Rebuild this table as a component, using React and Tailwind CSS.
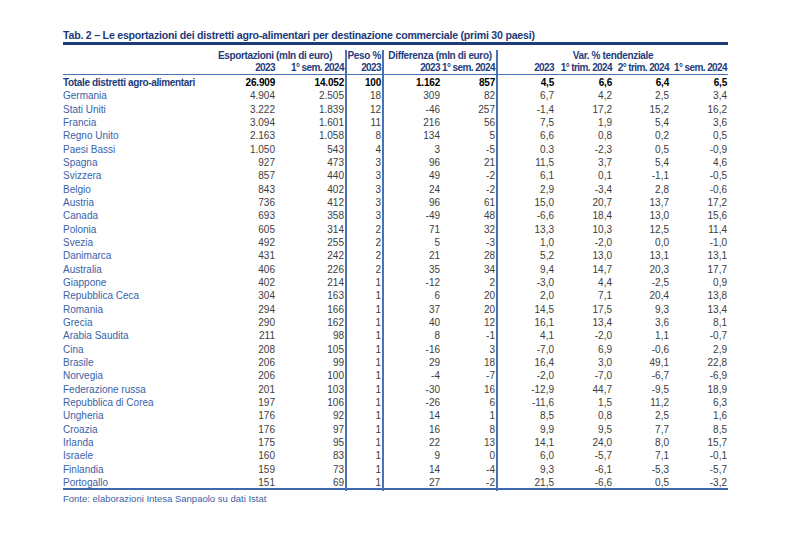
import React from "react";

const rows = [
  ["Germania", "4.904", "2.505", "18", "309", "82", "6,7", "4,2", "2,5", "3,4"],
  ["Stati Uniti", "3.222", "1.839", "12", "-46", "257", "-1,4", "17,2", "15,2", "16,2"],
  ["Francia", "3.094", "1.601", "11", "216", "56", "7,5", "1,9", "5,4", "3,6"],
  ["Regno Unito", "2.163", "1.058", "8", "134", "5", "6,6", "0,8", "0,2", "0,5"],
  ["Paesi Bassi", "1.050", "543", "4", "3", "-5", "0.3", "-2,3", "0,5", "-0,9"],
  ["Spagna", "927", "473", "3", "96", "21", "11,5", "3,7", "5,4", "4,6"],
  ["Svizzera", "857", "440", "3", "49", "-2", "6,1", "0,1", "-1,1", "-0,5"],
  ["Belgio", "843", "402", "3", "24", "-2", "2,9", "-3,4", "2,8", "-0,6"],
  ["Austria", "736", "412", "3", "96", "61", "15,0", "20,7", "13,7", "17,2"],
  ["Canada", "693", "358", "3", "-49", "48", "-6,6", "18,4", "13,0", "15,6"],
  ["Polonia", "605", "314", "2", "71", "32", "13,3", "10,3", "12,5", "11,4"],
  ["Svezia", "492", "255", "2", "5", "-3", "1,0", "-2,0", "0,0", "-1,0"],
  ["Danimarca", "431", "242", "2", "21", "28", "5,2", "13,0", "13,1", "13,1"],
  ["Australia", "406", "226", "2", "35", "34", "9,4", "14,7", "20,3", "17,7"],
  ["Giappone", "402", "214", "1", "-12", "2", "-3,0", "4,4", "-2,5", "0,9"],
  ["Repubblica Ceca", "304", "163", "1", "6", "20", "2,0", "7,1", "20,4", "13,8"],
  ["Romania", "294", "166", "1", "37", "20", "14,5", "17,5", "9,3", "13,4"],
  ["Grecia", "290", "162", "1", "40", "12", "16,1", "13,4", "3,6", "8,1"],
  ["Arabia Saudita", "211", "98", "1", "8", "-1", "4,1", "-2,0", "1,1", "-0,7"],
  ["Cina", "208", "105", "1", "-16", "3", "-7,0", "6,9", "-0,6", "2,9"],
  ["Brasile", "206", "99", "1", "29", "18", "16,4", "3,0", "49,1", "22,8"],
  ["Norvegia", "206", "100", "1", "-4", "-7", "-2,0", "-7,0", "-6,7", "-6,9"],
  ["Federazione russa", "201", "103", "1", "-30", "16", "-12,9", "44,7", "-9,5", "18,9"],
  ["Repubblica di Corea", "197", "106", "1", "-26", "6", "-11,6", "1,5", "11,2", "6,3"],
  ["Ungheria", "176", "92", "1", "14", "1", "8,5", "0,8", "2,5", "1,6"],
  ["Croazia", "176", "97", "1", "16", "8", "9,9", "9,5", "7,7", "8,5"],
  ["Irlanda", "175", "95", "1", "22", "13", "14,1", "24,0", "8,0", "15,7"],
  ["Israele", "160", "83", "1", "9", "0", "6,0", "-5,7", "7,1", "-0,1"],
  ["Finlandia", "159", "73", "1", "14", "-4", "9,3", "-6,1", "-5,3", "-5,7"],
  ["Portogallo", "151", "69", "1", "27", "-2", "21,5", "-6,6", "0,5", "-3,2"],
];

const grid =
  "grid grid-cols-[142px_71px_71px_37px_57px_57px_57px_58px_57px_58px]";
const sep = "border-r-2 border-[#4a72b6]";

// columns 3, 4 and 6 carry the vertical rules
const cellClass = (i) =>
  "text-right pr-[1px] whitespace-nowrap " + (i === 2 || i === 3 || i === 5 ? sep : "");

function Row({ cells, total }) {
  return (
    <div className={grid + " h-[13.33px] leading-[16px]"}>
      <div
        className={
          "whitespace-nowrap " +
          (total ? "font-bold text-[#1f3c7a] tracking-[-0.35px]" : "text-[#3a62a7]")
        }
      >
        {cells[0]}
      </div>
      {cells.slice(1).map((c, i) => (
        <div
          key={i}
          className={
            cellClass(i + 1) +
            (total ? " font-bold text-black tracking-[-0.2px]" : " text-[#3d3d3d]")
          }
        >
          {c}
        </div>
      ))}
    </div>
  );
}

export default function App() {
  return (
    <div className="w-[792px] h-[550px] bg-white font-['Liberation_Sans',Arial,sans-serif] text-[10px]">
      <div className="ml-[63px] pt-[28px] w-[665px]">
        {/* Title */}
        <div className="h-[14px] leading-[15px] text-[10.6px] font-bold tracking-[-0.22px] text-[#1d3a78] whitespace-nowrap">
          Tab. 2 – Le esportazioni dei distretti agro-alimentari per destinazione commerciale (primi 30 paesi)
        </div>
        <div className="h-[3px] bg-[#1f3b79]" />

        {/* Header */}
        <div className="border-b border-[#4a72b6] font-bold text-[#1f3c7a]">
          <div className={grid + " h-[17px] pt-[5px] leading-[12px] tracking-[-0.35px] whitespace-nowrap"}>
            <div />
            <div className={"col-span-2 text-center " + sep}>Esportazioni (mln di euro)</div>
            <div className={"text-right pr-[1px] " + sep}>Peso %</div>
            <div className={"col-span-2 text-center " + sep}>Differenza (mln di euro)</div>
            <div className="col-span-4 text-center">Var. % tendenziale</div>
          </div>
          <div className={grid + " h-[12px] leading-[12px] text-[10px] tracking-[-0.6px]"}>
            <div />
            {["2023", "1° sem. 2024", "2023", "2023", "1° sem. 2024", "2023", "1° trim. 2024", "2° trim. 2024", "1° sem. 2024"].map(
              (h, i) => (
                <div key={i} className={cellClass(i + 1)}>
                  {h}
                </div>
              )
            )}
          </div>
        </div>

        {/* Body */}
        <div className="border-b-2 border-[#3d67ae]">
          <Row
            total
            cells={["Totale distretti agro-alimentari", "26.909", "14.052", "100", "1.162", "857", "4,5", "6,6", "6,4", "6,5"]}
          />
          {rows.map((r) => (
            <Row key={r[0]} cells={r} />
          ))}
        </div>

        <div className="mt-[2px] text-[9.5px] leading-[13px] text-[#3a62a7]">
          Fonte: elaborazioni Intesa Sanpaolo su dati Istat
        </div>
      </div>
    </div>
  );
}
